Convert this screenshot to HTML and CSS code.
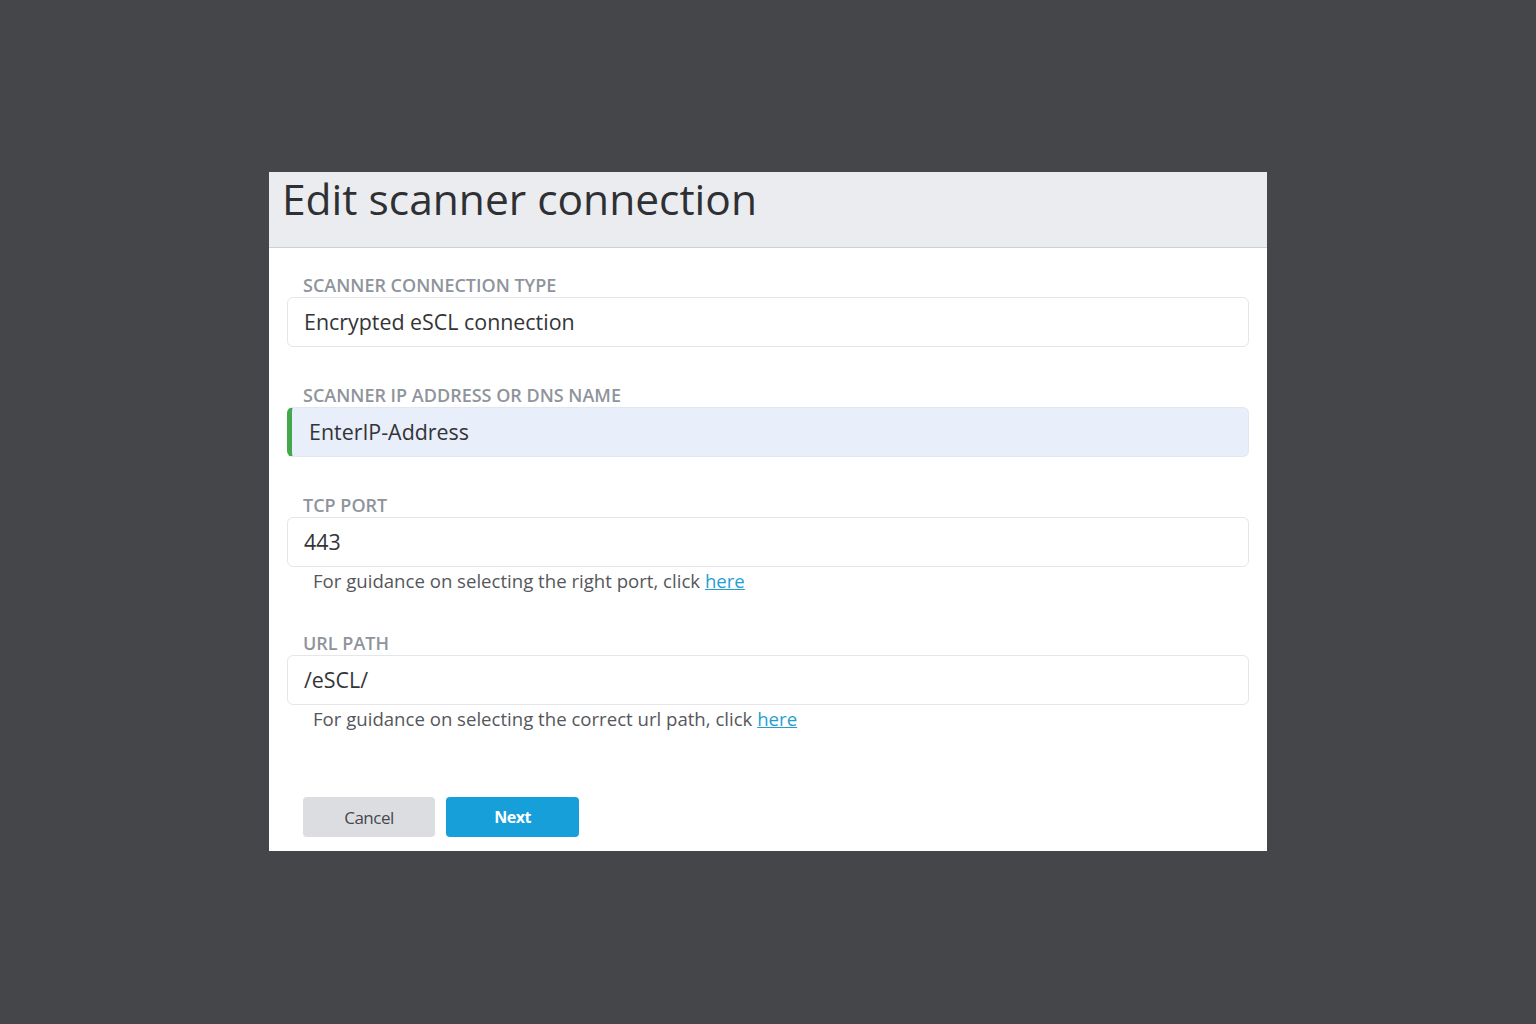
FILE: index.html
```html
<!DOCTYPE html>
<html lang="en">
<head>
<meta charset="utf-8">
<title>Edit scanner connection</title>
<link rel="stylesheet" href="styles.css">
</head>
<body>
<div class="dialog">
  <div class="dialog-header">
    <h1 class="dialog-title">Edit scanner connection</h1>
  </div>
  <div class="dialog-body">
    <div class="field">
      <div class="field-label">Scanner connection type</div>
      <div class="field-input">Encrypted eSCL connection</div>
    </div>
    <div class="field">
      <div class="field-label">Scanner IP address or DNS name</div>
      <div class="field-input field-input--active">EnterIP-Address</div>
    </div>
    <div class="field">
      <div class="field-label">TCP port</div>
      <div class="field-input">443</div>
      <div class="field-help">For guidance on selecting the right port, click <a href="#">here</a></div>
    </div>
    <div class="field field--last">
      <div class="field-label">URL path</div>
      <div class="field-input">/eSCL/</div>
      <div class="field-help">For guidance on selecting the correct url path, click <a href="#">here</a></div>
    </div>
    <div class="actions">
      <button class="btn btn-cancel">Cancel</button>
      <button class="btn btn-next">Next</button>
    </div>
  </div>
</div>
</body>
</html>
```

FILE: styles.css
```css
* { box-sizing: border-box; }
html, body { margin: 0; padding: 0; }
body {
  background: #45464a;
  min-height: 100vh;
  display: flex;
  align-items: flex-start;
  justify-content: center;
  padding-top: 172px;
  font-family: "Open Sans", "Noto Sans", sans-serif;
}
.dialog {
  width: 998px;
  background: #ffffff;
}
.dialog-header {
  height: 76px;
  background: #ebecef;
  border-bottom: 1px solid #cfd0d3;
  padding-left: 13px;
}
.dialog-title {
  margin: 0;
  font-weight: 400;
  font-size: 42.5px;
  line-height: 54px;
  color: #2f3033;
}
.dialog-body {
  padding: 25px 18px 14px 18px;
}
.field {
  margin-bottom: 36px;
}
.field--last {
  margin-bottom: 64px;
}
.field-label {
  padding-left: 16px;
  height: 24px;
  line-height: 24px;
  font-size: 18px;
  font-weight: 600;
  letter-spacing: 0;
  text-transform: uppercase;
  color: #8f949c;
}
.field-input {
  height: 50px;
  border: 1px solid #e4e6e9;
  border-radius: 6px;
  padding-left: 16px;
  line-height: 48px;
  font-size: 21.4px;
  color: #333438;
}
.field-input--active {
  background: #e8eefa;
  border-color: #e1e7f2;
  border-left: 5px solid #43a84c;
  padding-left: 17px;
}
.field-help {
  padding-left: 26px;
  height: 28px;
  line-height: 28px;
  font-size: 18.6px;
  color: #55575c;
}
.field-help a {
  color: #1f9fd2;
  text-decoration: underline;
}
.actions {
  display: flex;
  gap: 11px;
  padding-left: 16px;
}
.btn {
  width: 132px;
  height: 40px;
  border: none;
  border-radius: 4px;
  font-family: "Open Sans", "Noto Sans", sans-serif;
  font-size: 17px;
  letter-spacing: -0.5px;
}
.btn-cancel {
  background: #dcdde1;
  color: #46484d;
}
.btn-next {
  background: #169fd9;
  color: #ffffff;
  font-weight: 700;
  font-size: 16px;
  width: 133px;
}
```
